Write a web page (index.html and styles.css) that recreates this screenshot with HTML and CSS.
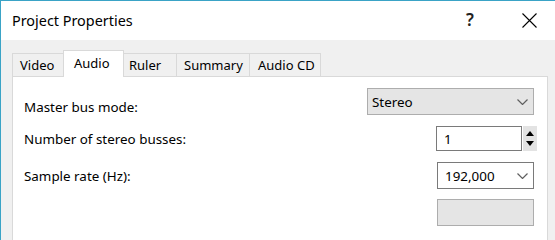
FILE: index.html
```html
<!DOCTYPE html>
<html>
<head>
<meta charset="utf-8">
<link rel="stylesheet" href="styles.css">
</head>
<body>
<div class="window">
  <div class="titlebar">
    <span class="title">Project Properties</span>
    <div class="title-btns">
      <span class="tbtn help">?</span>
      <span class="tbtn close"><svg width="15" height="15" viewBox="0 0 15 15"><path d="M0.5 0.5 L14.5 14.5 M14.5 0.5 L0.5 14.5" stroke="#000" stroke-width="1.1" fill="none"/></svg></span>
    </div>
  </div>
  <div class="content">
    <div class="tabs">
      <div class="tab tab-video">Video</div>
      <div class="tab tab-audio selected">Audio</div>
      <div class="tab tab-ruler">Ruler</div>
      <div class="tab tab-summary">Summary</div>
      <div class="tab tab-cd">Audio CD</div>
    </div>
    <div class="panel">
      <div class="row">
        <span class="label low">Master bus mode:</span>
        <div class="combo readonly wide"><span>Stereo</span><svg class="chev" width="11" height="6" viewBox="0 0 11 6"><polyline points="0.5,0.5 5.5,5.5 10.5,0.5" stroke="#606060" stroke-width="1.2" fill="none"/></svg></div>
      </div>
      <div class="row">
        <span class="label">Number of stereo busses:</span>
        <div class="spin">
          <div class="spin-box">1</div>
          <div class="spin-btns">
            <svg width="8" height="5" viewBox="0 0 8 5"><polygon points="4,0 8,5 0,5" fill="#000"/></svg>
            <svg width="8" height="5" viewBox="0 0 8 5"><polygon points="0,0 8,0 4,5" fill="#000"/></svg>
          </div>
        </div>
      </div>
      <div class="row">
        <span class="label">Sample rate (Hz):</span>
        <div class="combo narrow"><span>192,000</span><svg class="chev" width="11" height="6" viewBox="0 0 11 6"><polyline points="0.5,0.5 5.5,5.5 10.5,0.5" stroke="#606060" stroke-width="1.2" fill="none"/></svg></div>
      </div>
      <div class="row">
        <span class="label"></span>
        <div class="combo readonly narrow"></div>
      </div>
    </div>
  </div>
</div>
</body>
</html>
```
FILE: styles.css
```css
html, body {
  margin: 0;
  padding: 0;
  background: #f0f0f0;
  overflow: hidden;
}
body {
  width: 555px;
  height: 100vh;
  min-height: 200px;
  font-family: "Noto Sans", "Open Sans", sans-serif;
  color: #000;
}
.window {
  border-top: 1px solid #3aa3c6;
  border-left: 1px solid #3aa3c6;
  height: 100%;
  box-sizing: border-box;
  display: flex;
  flex-direction: column;
  background: #f0f0f0;
  overflow: hidden;
}
.titlebar {
  flex: 0 0 39px;
  height: 39px;
  background: #fff;
  display: flex;
  align-items: center;
  padding-left: 11px;
}
.title {
  font-size: 14.4px;
}
.title-btns {
  margin-left: auto;
  margin-right: 3px;
  display: flex;
  height: 100%;
}
.tbtn {
  width: 46px;
  display: flex;
  align-items: center;
  justify-content: center;
}
.help {
  margin-right: 13px;
  font-size: 17px;
  font-weight: 600;
  color: #222;
  padding-bottom: 2px;
  box-sizing: border-box;
}
.content {
  flex: 1;
  min-height: 0;
  padding: 10px 7px 0 11px;
  display: flex;
  flex-direction: column;
}
.tabs {
  flex: 0 0 26px;
  display: flex;
  align-items: flex-end;
  height: 26px;
}
.tab {
  height: 23px;
  box-sizing: border-box;
  border: 1px solid #d9d9d9;
  border-bottom: none;
  background: #f0f0f0;
  font-size: 13px;
  padding: 0 0 0 7px;
  display: flex;
  align-items: center;
  margin-left: -1px;
}
.tab-video { width: 52px; margin-left: 0; }
.tab-audio { width: 61px; }
.tab-ruler { width: 54px; padding-left: 5px; }
.tab-summary { width: 74px; }
.tab-cd { width: 72px; padding-left: 8px; }
.tab.selected {
  height: 27px;
  margin-bottom: -1px;
  background: #fff;
  position: relative;
  z-index: 1;
  padding: 0 0 3px 10px;
}
.panel {
  flex: 1;
  min-height: 0;
  overflow: hidden;
  background: #fff;
  border: 1px solid #d9d9d9;
  border-bottom: none;
  padding: 6px 13px 0 11px;
}
.row {
  display: flex;
  align-items: center;
  height: 37px;
}
.label {
  flex: 1;
  font-size: 13.4px;
}
.label.low {
  padding-top: 10px;
}
.combo {
  height: 27px;
  box-sizing: border-box;
  border: 1px solid #7a7a7a;
  background: #fff;
  display: flex;
  align-items: center;
  justify-content: space-between;
  padding: 0 5px 0 7px;
  font-size: 13.4px;
}
.combo.readonly {
  background: #e5e5e5;
  border-color: #adadad;
  padding-left: 4px;
}
.combo.wide {
  width: 167px;
}
.combo.narrow {
  width: 97px;
}
.spin {
  display: flex;
  margin-right: -3px;
}
.spin-box {
  width: 86px;
  height: 25px;
  box-sizing: border-box;
  border: 1px solid #7a7a7a;
  font-size: 13.4px;
  padding-left: 7px;
  display: flex;
  align-items: center;
}
.spin-btns {
  width: 14px;
  height: 25px;
  margin-left: 1px;
  background: #e3e3e3;
  display: flex;
  flex-direction: column;
  align-items: center;
  justify-content: space-around;
  padding: 2px 0;
  box-sizing: border-box;
}
```
